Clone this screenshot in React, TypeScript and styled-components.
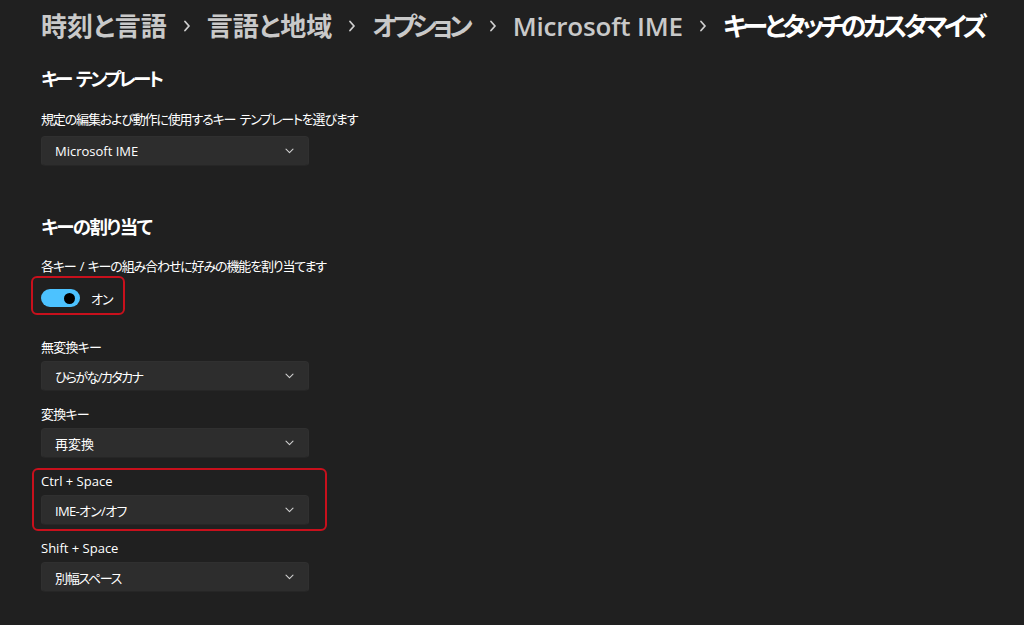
import React from "react";
import styled, { createGlobalStyle } from "styled-components";

const Global = createGlobalStyle`
  html, body { margin: 0; padding: 0; background: #202020; }
  body {
    font-family: "Segoe UI", "Open Sans", "Noto Sans CJK JP", sans-serif;
    font-feature-settings: "palt" 1;
    color: #ffffff;
    -webkit-font-smoothing: antialiased;
  }
`;

const Page = styled.div`
  width: 1024px;
  height: 625px;
  box-sizing: border-box;
  padding: 8px 0 0 41px;
  background: #202020;
  overflow: hidden;
`;

const Breadcrumb = styled.div`
  display: flex;
  align-items: center;
  height: 36px;
  white-space: nowrap;
`;

const Crumb = styled.span<{ $current?: boolean; $ls: number }>`
  font-size: 26px;
  font-weight: 600;
  line-height: 36px;
  letter-spacing: ${(p) => p.$ls}px;
  margin-right: ${(p) => -p.$ls}px;
  color: ${(p) => (p.$current ? "#ffffff" : "#c9c9c9")};
`;

const Sep = styled.span`
  display: inline-flex;
  align-items: center;
  justify-content: center;
  width: 40px;
  height: 36px;
`;

const SectionTitle = styled.h2<{ $top: number; $ls: number }>`
  margin: ${(p) => p.$top}px 0 0 0;
  font-size: 18.5px;
  font-weight: 600;
  line-height: 26px;
  letter-spacing: ${(p) => p.$ls}px;
  word-spacing: 3px;
  color: #ffffff;
`;

const Desc = styled.div<{ $top: number }>`
  margin-top: ${(p) => p.$top}px;
  font-size: 13px;
  line-height: 18px;
  letter-spacing: -1.15px;
  word-spacing: 2px;
  color: #ffffff;
`;

const Dropdown = styled.div`
  width: 268px;
  height: 30px;
  box-sizing: border-box;
  padding: 0 14px 0 13px;
  display: flex;
  align-items: center;
  justify-content: space-between;
  background: #2d2d2d;
  border: 1px solid #303030;
  border-bottom-color: #262626;
  border-radius: 4px;
  font-size: 13px;
  color: #ffffff;
`;

const Value = styled.span<{ $ls: number }>`
  letter-spacing: ${(p) => p.$ls}px;
`;

const Field = styled.div<{ $highlight?: boolean }>`
  position: relative;
  display: flex;
  flex-direction: column;
  gap: 5px;
  padding-bottom: 14px;
  width: 268px;
  &::before {
    content: "";
    display: ${(p) => (p.$highlight ? "block" : "none")};
    position: absolute;
    left: -9px;
    top: -4px;
    right: -18px;
    bottom: 8px;
    border: 2px solid #c8101c;
    border-radius: 6px;
    pointer-events: none;
  }
`;

const TemplateField = styled(Field)`
  margin-top: 8px;
  padding-bottom: 12px;
`;

const FieldLabel = styled.div<{ $ls: number }>`
  font-size: 13px;
  line-height: 18px;
  letter-spacing: ${(p) => p.$ls}px;
  color: #ffffff;
`;

const ToggleRow = styled.div`
  position: relative;
  margin-top: 14px;
  width: fit-content;
  display: flex;
  align-items: center;
  gap: 11px;
  height: 18px;
  &::before {
    content: "";
    position: absolute;
    left: -10px;
    top: -13px;
    right: -12px;
    bottom: -8px;
    border: 2px solid #c8101c;
    border-radius: 6px;
    pointer-events: none;
  }
`;

const Track = styled.div`
  width: 39px;
  height: 18px;
  border-radius: 9px;
  background: #4cc2ff;
  display: flex;
  align-items: center;
  justify-content: flex-end;
  padding-right: 5px;
  box-sizing: border-box;
`;

const Knob = styled.div`
  width: 11px;
  height: 11px;
  border-radius: 50%;
  background: #000000;
`;

const ToggleText = styled.span`
  font-size: 13px;
  letter-spacing: -1px;
  color: #ffffff;
`;

const Fields = styled.div`
  margin-top: 31px;
  display: flex;
  flex-direction: column;
`;

const Chevron = () => (
  <svg width="9" height="6" viewBox="0 0 9 6">
    <path d="M1 1.2 L4.5 4.6 L8 1.2" fill="none" stroke="#cfcfcf" strokeWidth="1.1" strokeLinecap="round" strokeLinejoin="round" />
  </svg>
);

const CrumbChevron = () => (
  <svg width="8" height="12" viewBox="0 0 8 12">
    <path d="M2 1.5 L6 6 L2 10.5" fill="none" stroke="#cfcfcf" strokeWidth="1.8" strokeLinecap="round" strokeLinejoin="round" />
  </svg>
);

const Select = ({ value, ls = 0 }: { value: string; ls?: number }) => (
  <Dropdown>
    <Value $ls={ls}>{value}</Value>
    <Chevron />
  </Dropdown>
);

const crumbs: { text: string; ls: number }[] = [
  { text: "時刻と言語", ls: 0 },
  { text: "言語と地域", ls: 0 },
  { text: "オプション", ls: -4.3 },
  { text: "Microsoft IME", ls: -0.2 },
];

const fields = [
  { label: "無変換キー", lls: -0.8, value: "ひらがな/カタカナ", vls: -1.6 },
  { label: "変換キー", lls: -0.8, value: "再変換", vls: 0 },
  { label: "Ctrl + Space", lls: 0, value: "IME-オン/オフ", vls: -0.7, highlight: true },
  { label: "Shift + Space", lls: 0, value: "別幅スペース", vls: -1.3 },
];

export default function App() {
  return (
    <Page>
      <Global />
      <Breadcrumb>
        {crumbs.map((c) => (
          <React.Fragment key={c.text}>
            <Crumb $ls={c.ls}>{c.text}</Crumb>
            <Sep>
              <CrumbChevron />
            </Sep>
          </React.Fragment>
        ))}
        <Crumb $current $ls={-3.8}>キーとタッチのカスタマイズ</Crumb>
      </Breadcrumb>

      <SectionTitle $top={22} $ls={-2.6}>キー テンプレート</SectionTitle>
      <Desc $top={18}>規定の編集および動作に使用するキー テンプレートを選びます</Desc>
      <TemplateField>
        <Select value="Microsoft IME" />
      </TemplateField>

      <SectionTitle $top={36} $ls={-1.5}>キーの割り当て</SectionTitle>
      <Desc $top={17}>各キー / キーの組み合わせに好みの機能を割り当てます</Desc>
      <ToggleRow>
        <Track>
          <Knob />
        </Track>
        <ToggleText>オン</ToggleText>
      </ToggleRow>

      <Fields>
        {fields.map((f) => (
          <Field key={f.label} $highlight={f.highlight}>
            <FieldLabel $ls={f.lls}>{f.label}</FieldLabel>
            <Select value={f.value} ls={f.vls} />
          </Field>
        ))}
      </Fields>
    </Page>
  );
}
